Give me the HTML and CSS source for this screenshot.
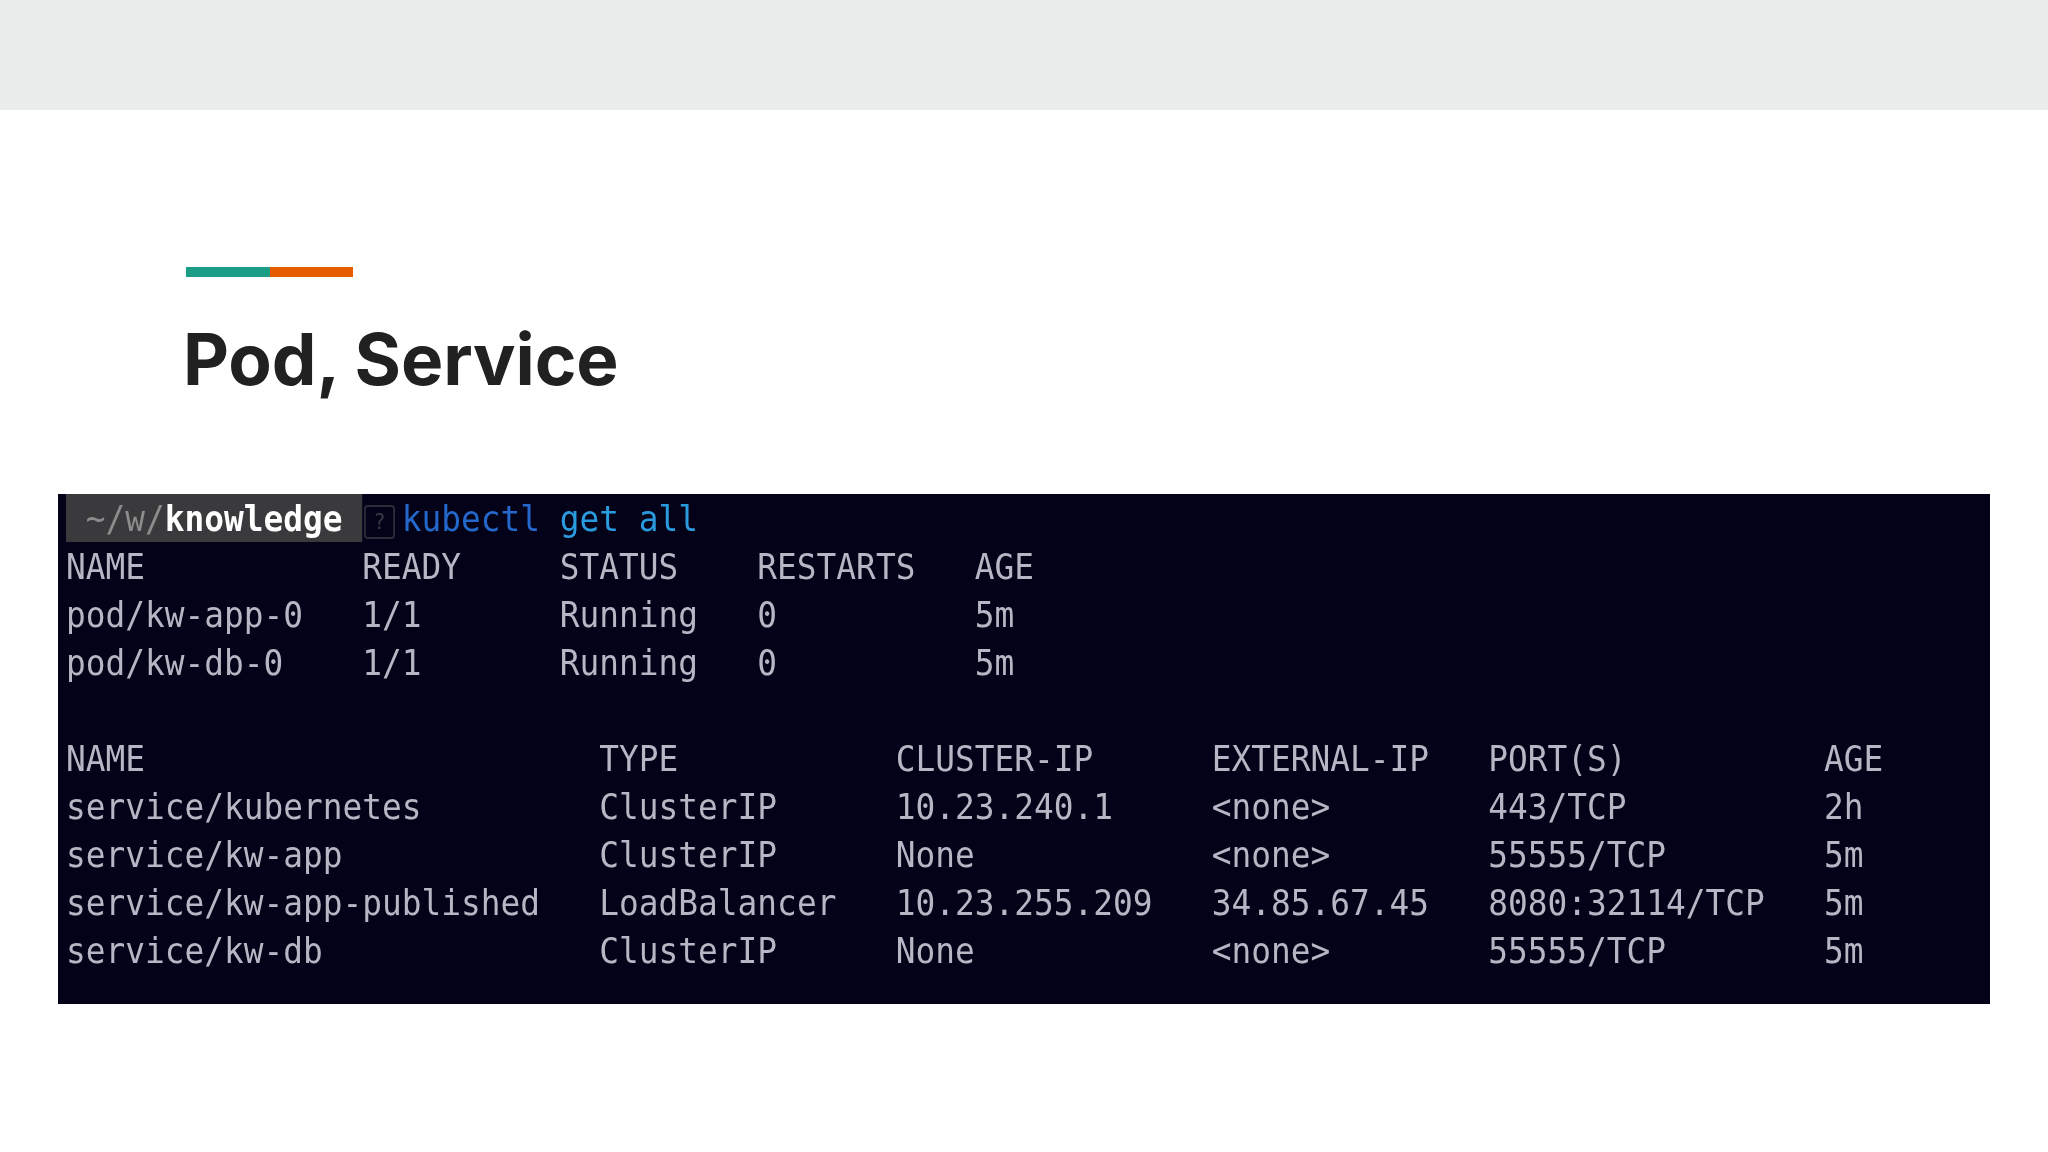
FILE: index.html
```html
<!DOCTYPE html>
<html lang="en">
<head>
<meta charset="utf-8">
<title>Pod, Service</title>
<link rel="stylesheet" href="styles.css">
</head>
<body>
<header class="band"></header>
<main class="slide">
  <div class="accent"><span class="accent-teal"></span><span class="accent-orange"></span></div>
  <h1 class="title">Pod, Service</h1>
  <section class="terminal">
    <div class="screen">
      <div class="prompt">
        <span class="path"><span class="dim">~/w/</span><b class="cwd">knowledge</b></span><span class="glyph">?</span><span class="cmd">kubectl</span><span class="args">get all</span>
      </div>
      <div class="table pods">
        <span>NAME</span><span>READY</span><span>STATUS</span><span>RESTARTS</span><span>AGE</span>
        <span>pod/kw-app-0</span><span>1/1</span><span>Running</span><span>0</span><span>5m</span>
        <span>pod/kw-db-0</span><span>1/1</span><span>Running</span><span>0</span><span>5m</span>
      </div>
      <div class="table services">
        <span>NAME</span><span>TYPE</span><span>CLUSTER-IP</span><span>EXTERNAL-IP</span><span>PORT(S)</span><span>AGE</span>
        <span>service/kubernetes</span><span>ClusterIP</span><span>10.23.240.1</span><span>&lt;none&gt;</span><span>443/TCP</span><span>2h</span>
        <span>service/kw-app</span><span>ClusterIP</span><span>None</span><span>&lt;none&gt;</span><span>55555/TCP</span><span>5m</span>
        <span>service/kw-app-published</span><span>LoadBalancer</span><span>10.23.255.209</span><span>34.85.67.45</span><span>8080:32114/TCP</span><span>5m</span>
        <span>service/kw-db</span><span>ClusterIP</span><span>None</span><span>&lt;none&gt;</span><span>55555/TCP</span><span>5m</span>
      </div>
    </div>
  </section>
</main>
</body>
</html>
```

FILE: styles.css
```css
* { box-sizing: border-box; }

html, body {
  margin: 0;
  height: 100%;
  overflow: hidden;
  background: #ffffff;
}

.band {
  height: 110px;
  background: #e9eeec;
}

.slide {
  padding-top: 157px;
}

.accent {
  display: flex;
  width: 167px;
  height: 10px;
  margin-left: 186px;
}

.accent-teal {
  flex: 0 0 84px;
  background: #1a9c87;
}

.accent-orange {
  flex: 1;
  background: #e65c00;
}

.title {
  margin: 37px 0 0 183px;
  height: 100px;
  font-family: Inter, "Open Sans", sans-serif;
  font-size: 71px;
  line-height: 90px;
  font-weight: 700;
  letter-spacing: -0.1px;
  color: #212121;
}

.terminal {
  width: 1932px;
  height: 510px;
  margin: 80px 0 0 58px;
  padding-left: 8px;
  overflow: hidden;
  background: #030218;
}

.screen {
  width: 2100px;
  font-family: "DejaVu Sans Mono", monospace;
  font-size: 36px;
  line-height: 50px;
  color: #b6b6c4;
  transform: scaleX(0.9114);
  transform-origin: left top;
  filter: blur(0.6px);
}

.prompt {
  display: flex;
  height: 48px;
}

.path {
  width: 15ch;
  padding-left: 1ch;
  background: #3a3a3c;
}

.dim {
  color: #8c8c8c;
}

.cwd {
  font-weight: 700;
  color: #ffffff;
}

.glyph {
  width: 34px;
  height: 34px;
  margin: 11px 7.3px 0 2px;
  border: 2px solid #2c2c38;
  border-radius: 4px;
  font-size: 22px;
  line-height: 30px;
  text-align: center;
  color: #3a3a46;
}

.cmd {
  width: 8ch;
  color: #2468cc;
}

.args {
  white-space: pre;
  color: #2b9be0;
}

.table {
  display: grid;
  grid-auto-rows: 48px;
}

.pods {
  grid-template-columns: 15ch 10ch 10ch 11ch auto;
  margin-bottom: 48px;
}

.services {
  grid-template-columns: 27ch 15ch 16ch 14ch 17ch auto;
}
```
